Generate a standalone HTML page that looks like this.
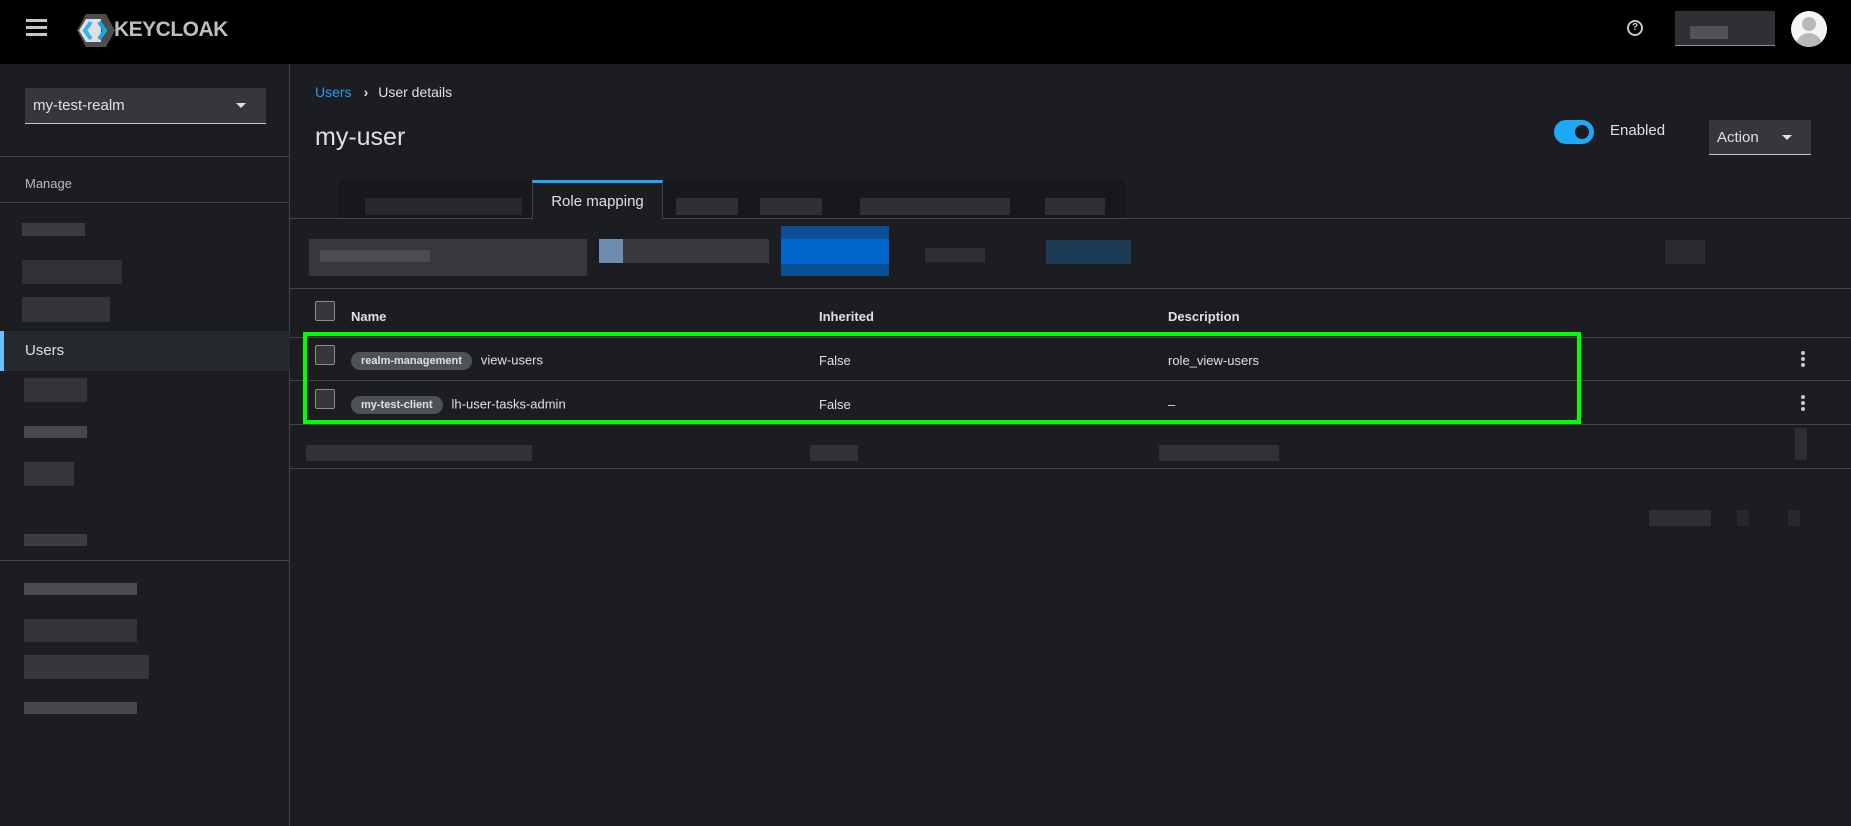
<!DOCTYPE html>
<html><head><meta charset="utf-8"><style>
*{box-sizing:border-box;margin:0;padding:0}
body{width:1851px;height:826px;background:#1b1d21;font-family:"Liberation Sans",sans-serif;color:#e0e0e0;position:relative;overflow:hidden;font-size:14px}
.a{position:absolute}
.hdr{left:0;top:0;width:1851px;height:64px;background:#000}
.side{left:0;top:64px;width:290px;height:762px;background:#1b1d21;border-right:1px solid #444548}
.blur{position:absolute;background:#3a3c40}
.hl{position:absolute;height:1px;background:#444548}
.cb{position:absolute;width:20px;height:20px;border:1px solid #8a8d90;border-radius:2px;background:#36373a}
.chip{display:inline-block;background:#4f5255;color:#e0e0e0;font-weight:bold;font-size:11px;border-radius:10px;padding:3px 10px;margin-right:9px;vertical-align:middle}
.kebab{position:absolute;width:4px}
.kebab i{display:block;width:4px;height:4px;border-radius:2px;background:#c7c7c7;margin-bottom:2px}
</style></head><body>
<div class="a hdr"></div>
<div class="a" style="left:26px;top:19px;width:21px;height:3px;background:#c7c7c7"></div>
<div class="a" style="left:26px;top:26px;width:21px;height:3px;background:#c7c7c7"></div>
<div class="a" style="left:26px;top:33px;width:21px;height:3px;background:#c7c7c7"></div>
<svg class="a" style="left:77px;top:14px" width="38" height="33" viewBox="0 0 38 33">
<polygon points="9,0 29,0 38,16.5 29,33 9,33 0,16.5" fill="#4d4d4d"/>
<polygon points="2,16.5 9,5 24,5 24,28 9,28" fill="#e0e0e0"/>
<path d="M14 8 L8 16.5 L14 25" stroke="#33b6f0" stroke-width="4" fill="none"/>
<path d="M22 8 L28 16.5 L22 25" stroke="#1ca4e8" stroke-width="4" fill="none"/>
</svg>
<div class="a" style="left:114px;top:18px;font-size:21px;font-weight:bold;color:#bdbdbd;letter-spacing:-0.5px">KEYCLOAK</div>
<div class="a" style="left:1627px;top:20px;width:16px;height:16px;border:2px solid #c7c7c7;border-radius:50%;font-size:10px;font-weight:bold;text-align:center;line-height:12px;color:#c7c7c7">?</div>
<div class="a" style="left:1675px;top:11px;width:100px;height:35px;background:#2e3033;border-bottom:1px solid #8a8d90"></div>
<div class="blur" style="left:1690px;top:26px;width:38px;height:13px;background:#505255"></div>
<div class="a" style="left:1791px;top:11px;width:36px;height:36px;border-radius:50%;background:#f5f5f5;overflow:hidden">
<div class="a" style="left:11px;top:6px;width:14px;height:14px;border-radius:50%;background:#b8b8b8"></div>
<div class="a" style="left:5px;top:22px;width:26px;height:20px;border-radius:13px 13px 0 0;background:#b8b8b8"></div></div>

<div class="a side"></div>
<div class="a" style="left:25px;top:88px;width:241px;height:36px;background:#36373a;border-bottom:1px solid #c7c7c7;padding:9px 8px;font-size:15px;color:#e0e0e0">my-test-realm</div>
<div class="a" style="left:236px;top:103px;width:0;height:0;border-left:5px solid transparent;border-right:5px solid transparent;border-top:5px solid #e0e0e0"></div>
<div class="hl" style="left:0;top:156px;width:290px"></div>
<div class="a" style="left:25px;top:176px;font-size:13px;color:#b8bbbe">Manage</div>
<div class="hl" style="left:0;top:202px;width:290px"></div>
<div class="blur" style="left:22px;top:223px;width:63px;height:13px"></div>
<div class="blur" style="left:22px;top:260px;width:100px;height:24px;background:#2f3134"></div>
<div class="blur" style="left:22px;top:297px;width:88px;height:25px;background:#323437"></div>
<div class="a" style="left:0;top:331px;width:290px;height:40px;background:#26292d;border-left:4px solid #73bcf7"></div>
<div class="a" style="left:25px;top:342px;font-size:15px;color:#e0e0e0">Users</div>
<div class="blur" style="left:24px;top:378px;width:63px;height:24px;background:#323437"></div>
<div class="blur" style="left:24px;top:426px;width:63px;height:12px;background:#45474a"></div>
<div class="blur" style="left:24px;top:462px;width:50px;height:24px;background:#35373a"></div>
<div class="blur" style="left:24px;top:534px;width:63px;height:12px"></div>
<div class="hl" style="left:0;top:560px;width:290px"></div>
<div class="blur" style="left:24px;top:583px;width:113px;height:12px;background:#4a4c50"></div>
<div class="blur" style="left:24px;top:619px;width:113px;height:23px;background:#323437"></div>
<div class="blur" style="left:24px;top:655px;width:125px;height:24px;background:#35373a"></div>
<div class="blur" style="left:24px;top:702px;width:113px;height:12px;background:#45474a"></div>

<div class="a" style="left:315px;top:84px;font-size:14px"><span style="color:#2b9af3">Users</span><span style="color:#e0e0e0;margin:0 10px 0 12px;font-weight:bold">›</span><span style="color:#e0e0e0">User details</span></div>
<div class="a" style="left:315px;top:123px;font-size:25px;color:#e0e0e0">my-user</div>
<div class="a" style="left:1554px;top:120px;width:40px;height:24px;border-radius:12px;background:#1fa7f8"></div>
<div class="a" style="left:1575px;top:125px;width:14px;height:14px;border-radius:50%;background:#1b1d21"></div>
<div class="a" style="left:1610px;top:122px;font-size:15px;color:#e0e0e0">Enabled</div>
<div class="a" style="left:1709px;top:120px;width:102px;height:35px;background:#36373a;border-bottom:1px solid #c7c7c7;padding:9px 8px;font-size:15px">Action</div>
<div class="a" style="left:1782px;top:135px;width:0;height:0;border-left:5px solid transparent;border-right:5px solid transparent;border-top:5px solid #e0e0e0"></div>

<div class="a" style="left:339px;top:180px;width:193px;height:39px;background:#16181b"></div>
<div class="blur" style="left:365px;top:198px;width:80px;height:17px;background:#26282b"></div>
<div class="blur" style="left:438px;top:198px;width:84px;height:17px;background:#26282b"></div>
<div class="a" style="left:532px;top:180px;width:131px;height:39px;border-top:3px solid #1fa7f8;border-left:1px solid #444548;border-right:1px solid #444548;padding-top:10px;text-align:center;font-size:15px;color:#e0e0e0">Role mapping</div>
<div class="a" style="left:663px;top:180px;width:462px;height:39px;background:#16181b"></div>
<div class="blur" style="left:676px;top:198px;width:62px;height:17px;background:#2e3033"></div>
<div class="blur" style="left:760px;top:198px;width:62px;height:17px;background:#2e3033"></div>
<div class="blur" style="left:860px;top:198px;width:150px;height:17px;background:#2e3033"></div>
<div class="blur" style="left:1045px;top:198px;width:60px;height:17px;background:#2e3033"></div>
<div class="hl" style="left:290px;top:218px;width:242px"></div>
<div class="hl" style="left:663px;top:218px;width:1188px"></div>

<div class="blur" style="left:309px;top:239px;width:278px;height:37px;background:#36383c"></div>
<div class="blur" style="left:320px;top:250px;width:110px;height:12px;background:#4a4c50"></div>
<div class="blur" style="left:599px;top:239px;width:170px;height:24px;background:#38393c"></div>
<div class="blur" style="left:599px;top:239px;width:24px;height:24px;background:#6e8cb0"></div>
<div class="blur" style="left:781px;top:226px;width:108px;height:50px;background:#0c4f95"></div>
<div class="blur" style="left:781px;top:239px;width:108px;height:25px;background:#0066cc"></div>
<div class="blur" style="left:925px;top:248px;width:60px;height:14px;background:#2e3033"></div>
<div class="blur" style="left:1046px;top:240px;width:85px;height:24px;background:#1c3a52"></div>
<div class="blur" style="left:1665px;top:240px;width:40px;height:24px;background:#2a2b2e"></div>
<div class="hl" style="left:290px;top:288px;width:1561px"></div>

<div class="cb" style="left:315px;top:301px"></div>
<div class="a" style="left:351px;top:309px;font-weight:bold;font-size:13px">Name</div>
<div class="a" style="left:819px;top:309px;font-weight:bold;font-size:13px">Inherited</div>
<div class="a" style="left:1168px;top:309px;font-weight:bold;font-size:13px">Description</div>
<div class="hl" style="left:290px;top:337px;width:1561px"></div>
<div class="cb" style="left:315px;top:345px"></div>
<div class="a" style="left:351px;top:352px;font-size:13px"><span class="chip">realm-management</span>view-users</div>
<div class="a" style="left:819px;top:353px;font-size:13px">False</div>
<div class="a" style="left:1168px;top:353px;font-size:13px">role_view-users</div>
<div class="kebab" style="left:1801px;top:351px"><i></i><i></i><i></i></div>
<div class="hl" style="left:290px;top:380px;width:1561px"></div>
<div class="cb" style="left:315px;top:389px"></div>
<div class="a" style="left:351px;top:396px;font-size:13px"><span class="chip">my-test-client</span>lh-user-tasks-admin</div>
<div class="a" style="left:819px;top:397px;font-size:13px">False</div>
<div class="a" style="left:1168px;top:397px;font-size:13px">–</div>
<div class="kebab" style="left:1801px;top:395px"><i></i><i></i><i></i></div>
<div class="hl" style="left:290px;top:424px;width:1561px"></div>
<div class="blur" style="left:306px;top:445px;width:226px;height:16px;background:#303236"></div>
<div class="blur" style="left:810px;top:445px;width:48px;height:16px;background:#303236"></div>
<div class="blur" style="left:1159px;top:445px;width:120px;height:16px;background:#303236"></div>
<div class="blur" style="left:1795px;top:428px;width:12px;height:32px;background:#2c2e31"></div>
<div class="hl" style="left:290px;top:468px;width:1561px"></div>
<div class="blur" style="left:1649px;top:510px;width:62px;height:16px;background:#2e3033"></div>
<div class="blur" style="left:1737px;top:510px;width:12px;height:16px;background:#26282b"></div>
<div class="blur" style="left:1788px;top:510px;width:12px;height:16px;background:#26282b"></div>

<div class="a" style="left:303px;top:332px;width:1278px;height:92px;border:4px solid #00ff00"></div>
</body></html>
